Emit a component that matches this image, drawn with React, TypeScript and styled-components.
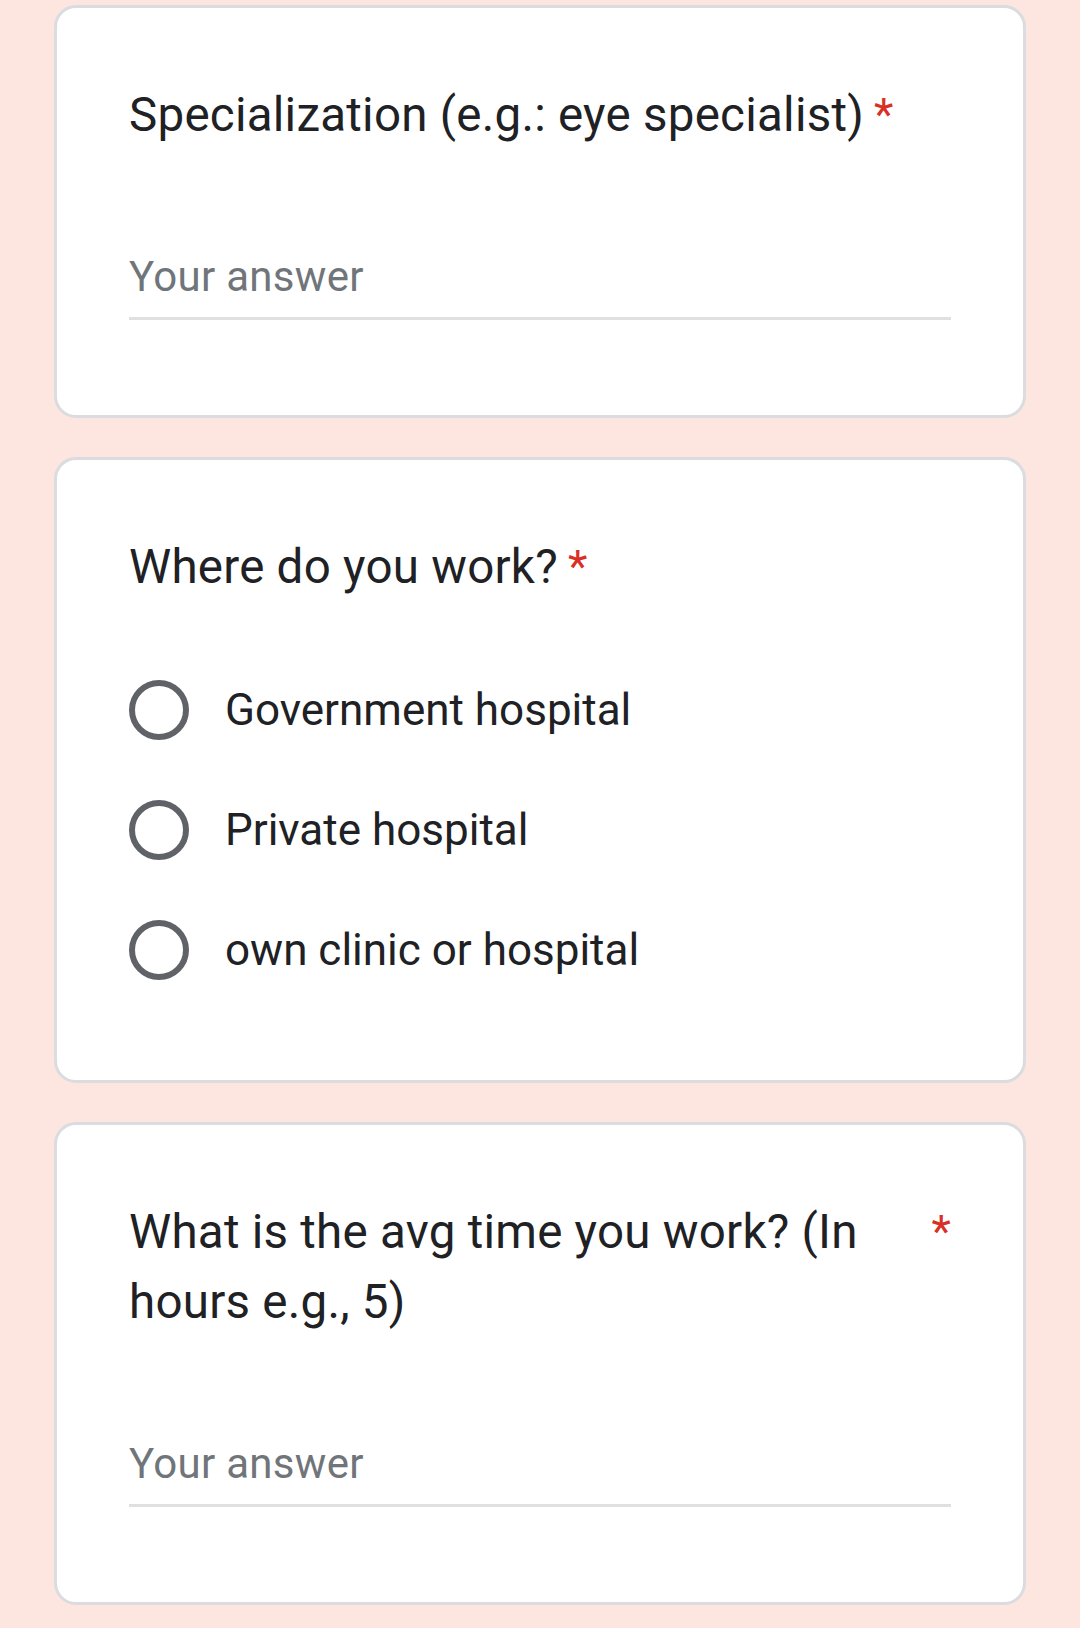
import styled, { createGlobalStyle } from "styled-components";

const GlobalStyle = createGlobalStyle`
  html, body {
    margin: 0;
    padding: 0;
    background: #fde6e0;
  }

  body {
    font-family: Roboto, "Noto Sans", "Liberation Sans", sans-serif;
    -webkit-font-smoothing: antialiased;
  }
`;

const Page = styled.main`
  display: flex;
  flex-direction: column;
  gap: 39px;
  padding: 5px 54px 30px;
  min-height: 1628px;
  box-sizing: border-box;
  background: #fde6e0;
`;

const Card = styled.section`
  display: flex;
  flex-direction: column;
  padding: 72px 72px 72px;
  background: #ffffff;
  border: 3px solid #dadce0;
  border-radius: 22px;
`;

const TitleRow = styled.div`
  display: flex;
  align-items: flex-start;
`;

const Title = styled.div`
  flex: 0 1 auto;
  font-size: 47.5px;
  line-height: 70px;
  color: #202124;
  letter-spacing: 0.25px;
`;

const Required = styled.span`
  flex: none;
  padding-left: 10px;
  font-size: 45px;
  line-height: 70px;
  color: #d93025;
`;

const Answer = styled.div`
  margin: 97px 0 23px;
  padding-bottom: 10px;
  font-size: 42px;
  line-height: 60px;
  color: #70757a;
  letter-spacing: 0.3px;
  border-bottom: 3px solid #e0e0e0;
`;

const Options = styled.ul`
  display: flex;
  flex-direction: column;
  gap: 4px;
  margin: 50px 0 0;
  padding: 0;
  list-style: none;
`;

const Option = styled.li`
  display: flex;
  align-items: center;
  height: 116px;
`;

const Radio = styled.span`
  flex: none;
  width: 60px;
  height: 60px;
  border: 6px solid #5f6368;
  border-radius: 50%;
  box-sizing: border-box;
`;

const OptionLabel = styled.span`
  margin-left: 36px;
  font-size: 44px;
  line-height: 60px;
  color: #202124;
`;

const Question = ({ title }: { title: string }) => (
  <TitleRow>
    <Title>{title}</Title>
    <Required>*</Required>
  </TitleRow>
);

const workplaces = ["Government hospital", "Private hospital", "own clinic or hospital"];

const App = () => {
  return (
    <>
      <GlobalStyle />
      <Page>
        <Card>
          <Question title="Specialization (e.g.: eye specialist)" />
          <Answer>Your answer</Answer>
        </Card>
        <Card>
          <Question title="Where do you work?" />
          <Options>
            {workplaces.map((place) => (
              <Option key={place}>
                <Radio />
                <OptionLabel>{place}</OptionLabel>
              </Option>
            ))}
          </Options>
        </Card>
        <Card>
          <Question title="What is the avg time you work? (In hours e.g., 5)" />
          <Answer>Your answer</Answer>
        </Card>
      </Page>
    </>
  );
};

export default App;
